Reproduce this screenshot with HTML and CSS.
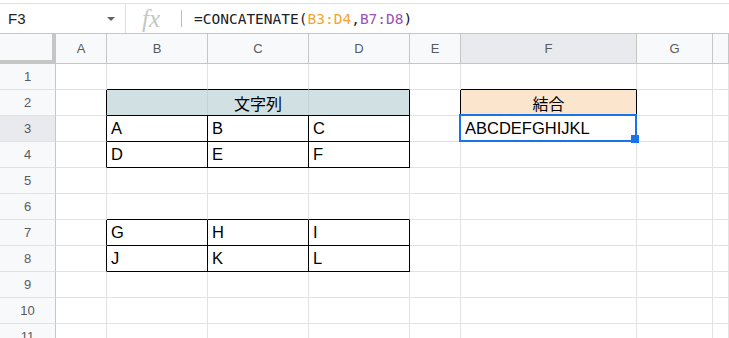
FILE: index.html
```html
<!DOCTYPE html>
<html lang="ja">
<head>
    <meta charset="UTF-8">
    <title>Sheet</title>
    <link rel="stylesheet" href="styles.css">
</head>
<body>
    <div class="formula-bar">
        <div class="name-box">
            <span class="name">F3</span>
            <span class="arrow"></span>
        </div>
        <div class="fx">fx</div>
        <div class="bar-sep"></div>
        <div class="formula">=CONCATENATE(<span class="ref1">B3:D4</span>,<span class="ref2">B7:D8</span>)</div>
    </div>
    <div class="grid">
        <!-- header -->
        <div class="corner"></div>
        <div class="c ch">A</div>
        <div class="c ch">B</div>
        <div class="c ch">C</div>
        <div class="c ch">D</div>
        <div class="c ch">E</div>
        <div class="c ch active">F</div>
        <div class="c ch">G</div>
        <div class="c ch"></div>

        <!-- row 1 -->
        <div class="c rh">1</div>
        <div class="c"></div>
        <div class="c bb"></div>
        <div class="c bb"></div>
        <div class="c bb"></div>
        <div class="c"></div>
        <div class="c bb"></div>
        <div class="c"></div>
        <div class="c"></div>

        <!-- row 2 -->
        <div class="c rh">2</div>
        <div class="c br"></div>
        <div class="c bk merged">文字列</div>
        <div class="c br"></div>
        <div class="c bk head-orange">結合</div>
        <div class="c"></div>
        <div class="c"></div>

        <!-- row 3 -->
        <div class="c rh active">3</div>
        <div class="c br"></div>
        <div class="c bk">A</div>
        <div class="c bk">B</div>
        <div class="c bk">C</div>
        <div class="c"></div>
        <div class="c current">ABCDEFGHIJKL<span class="sel-box"><span class="handle"></span></span></div>
        <div class="c"></div>
        <div class="c"></div>

        <!-- row 4 -->
        <div class="c rh">4</div>
        <div class="c br"></div>
        <div class="c bk">D</div>
        <div class="c bk">E</div>
        <div class="c bk">F</div>
        <div class="c"></div>
        <div class="c"></div>
        <div class="c"></div>
        <div class="c"></div>

        <!-- row 5 -->
        <div class="c rh">5</div>
        <div class="c"></div>
        <div class="c"></div>
        <div class="c"></div>
        <div class="c"></div>
        <div class="c"></div>
        <div class="c"></div>
        <div class="c"></div>
        <div class="c"></div>

        <!-- row 6 -->
        <div class="c rh">6</div>
        <div class="c"></div>
        <div class="c bb"></div>
        <div class="c bb"></div>
        <div class="c bb"></div>
        <div class="c"></div>
        <div class="c"></div>
        <div class="c"></div>
        <div class="c"></div>

        <!-- row 7 -->
        <div class="c rh">7</div>
        <div class="c br"></div>
        <div class="c bk">G</div>
        <div class="c bk">H</div>
        <div class="c bk">I</div>
        <div class="c"></div>
        <div class="c"></div>
        <div class="c"></div>
        <div class="c"></div>

        <!-- row 8 -->
        <div class="c rh">8</div>
        <div class="c br"></div>
        <div class="c bk">J</div>
        <div class="c bk">K</div>
        <div class="c bk">L</div>
        <div class="c"></div>
        <div class="c"></div>
        <div class="c"></div>
        <div class="c"></div>

        <!-- row 9 -->
        <div class="c rh">9</div>
        <div class="c"></div>
        <div class="c"></div>
        <div class="c"></div>
        <div class="c"></div>
        <div class="c"></div>
        <div class="c"></div>
        <div class="c"></div>
        <div class="c"></div>

        <!-- row 10 -->
        <div class="c rh">10</div>
        <div class="c"></div>
        <div class="c"></div>
        <div class="c"></div>
        <div class="c"></div>
        <div class="c"></div>
        <div class="c"></div>
        <div class="c"></div>
        <div class="c"></div>

        <!-- row 11 -->
        <div class="c rh">11</div>
        <div class="c"></div>
        <div class="c"></div>
        <div class="c"></div>
        <div class="c"></div>
        <div class="c"></div>
        <div class="c"></div>
        <div class="c"></div>
        <div class="c"></div>
    </div>
</body>
</html>
```

FILE: styles.css
```css
body {
    margin: 0;
    padding-top: 3px;
    background: #fff;
    font-family: Arial, "Liberation Sans", "Noto Sans CJK JP", sans-serif;
    color: #000;
    overflow: hidden;
}
.formula-bar {
    display: flex;
    align-items: center;
    height: 29px;
    border-top: 1px solid #e0e0e0;
    border-bottom: 1px solid #c4c7c5;
}
.name-box {
    display: flex;
    align-items: center;
    width: 126px;
    height: 100%;
    box-sizing: border-box;
    padding-left: 8px;
    border-right: 1px solid #e0e0e0;
}
.name {
    font-size: 15px;
    color: #202124;
    flex: 1;
}
.arrow {
    width: 0;
    height: 0;
    margin-right: 10px;
    border-left: 4px solid transparent;
    border-right: 4px solid transparent;
    border-top: 4px solid #5f6368;
}
.fx {
    width: 55px;
    padding-left: 16px;
    box-sizing: border-box;
    font-family: "Liberation Serif", serif;
    font-style: italic;
    font-size: 25px;
    color: #c4c7c5;
    line-height: 1;
}
.bar-sep {
    width: 1px;
    height: 17px;
    background: #b9bcbf;
    margin-right: 12px;
}
.formula {
    font-family: "DejaVu Sans Mono", monospace;
    font-size: 14.5px;
    color: #202124;
}
.ref1 {
    color: #f4a432;
}
.ref2 {
    color: #9a52b4;
}
.grid {
    display: grid;
    grid-template-columns: 56px 51px 101px 101px 101px 51px 176px 76px 1fr;
    grid-template-rows: 30px;
    grid-auto-rows: 26px;
}
.c {
    box-sizing: border-box;
    border-right: 1px solid #e2e2e2;
    border-bottom: 1px solid #e2e2e2;
    display: flex;
    align-items: center;
    padding: 0 4px;
    font-size: 16.5px;
    white-space: nowrap;
}
.corner {
    background: #f8f9fa;
    border-right: 4px solid #c4c7c5;
    border-bottom: 4px solid #c4c7c5;
}
.ch {
    justify-content: center;
    background: #f8f9fa;
    border-right-color: #c4c7c5;
    border-bottom-color: #c4c7c5;
    font-size: 13px;
    color: #575b60;
}
.rh {
    justify-content: center;
    background: #f8f9fa;
    border-right-color: #c4c7c5;
    border-bottom-color: #e2e2e2;
    font-size: 13px;
    color: #575b60;
}
.ch.active,
.rh.active {
    background: #e8eaed;
}
.bb {
    border-bottom-color: #000;
}
.br {
    border-right-color: #000;
}
.bk {
    border-right-color: #000;
    border-bottom-color: #000;
}
.merged {
    grid-column: span 3;
    justify-content: center;
    background-color: #d0e0e3;
    background-image:
        linear-gradient(to right, transparent 100px, #c3d3d6 100px, #c3d3d6 101px, transparent 101px),
        linear-gradient(to right, transparent 201px, #c3d3d6 201px, #c3d3d6 202px, transparent 202px);
    font-family: "Noto Sans CJK JP", sans-serif;
    font-size: 16px;
}
.head-orange {
    justify-content: center;
    background: #fce5cd;
    font-family: "Noto Sans CJK JP", sans-serif;
    font-size: 16px;
}
.current {
    position: relative;
}
.sel-box {
    position: absolute;
    left: -2px;
    top: -2px;
    width: 178px;
    height: 28px;
    box-sizing: border-box;
    border: 2px solid #1a73e8;
}
.handle {
    position: absolute;
    left: 170px;
    top: 19px;
    width: 8px;
    height: 8px;
    background: #1a73e8;
}
```
